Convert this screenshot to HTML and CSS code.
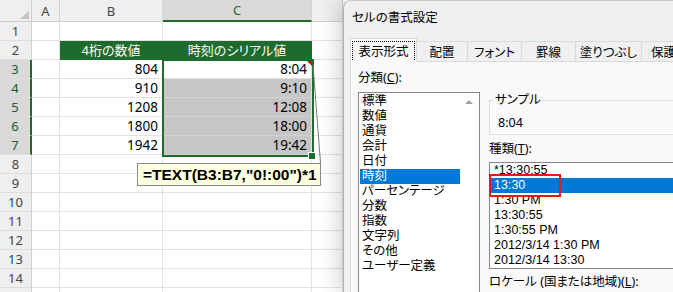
FILE: index.html
```html
<!DOCTYPE html>
<html lang="ja">
<head>
<meta charset="utf-8">
<title>セルの書式設定</title>
<link rel="stylesheet" href="styles.css">
</head>
<body>
<div class="sheet">
  <div class="cell corner"><span class="tri"></span></div>
  <div class="cell colh">A</div>
  <div class="cell colh">B</div>
  <div class="cell colh sel">C</div>
  <div class="cell colh"></div>

  <div class="cell rowh">1</div><div class="cell"></div><div class="cell"></div><div class="cell"></div><div class="cell"></div>
  <div class="cell rowh">2</div><div class="cell"></div><div class="cell hdr">4桁の数値</div><div class="cell hdr">時刻のシリアル値</div><div class="cell"></div>
  <div class="cell rowh sel">3</div><div class="cell"></div><div class="cell">804</div><div class="cell">8:04</div><div class="cell"></div>
  <div class="cell rowh sel">4</div><div class="cell"></div><div class="cell">910</div><div class="cell fill">9:10</div><div class="cell"></div>
  <div class="cell rowh sel">5</div><div class="cell"></div><div class="cell">1208</div><div class="cell fill">12:08</div><div class="cell"></div>
  <div class="cell rowh sel">6</div><div class="cell"></div><div class="cell">1800</div><div class="cell fill">18:00</div><div class="cell"></div>
  <div class="cell rowh sel">7</div><div class="cell"></div><div class="cell">1942</div><div class="cell fill">19:42</div><div class="cell"></div>
  <div class="cell rowh">8</div><div class="cell"></div><div class="cell"></div><div class="cell"></div><div class="cell"></div>
  <div class="cell rowh">9</div><div class="cell"></div><div class="cell"></div><div class="cell"></div><div class="cell"></div>
  <div class="cell rowh">10</div><div class="cell"></div><div class="cell"></div><div class="cell"></div><div class="cell"></div>
  <div class="cell rowh">11</div><div class="cell"></div><div class="cell"></div><div class="cell"></div><div class="cell"></div>
  <div class="cell rowh">12</div><div class="cell"></div><div class="cell"></div><div class="cell"></div><div class="cell"></div>
  <div class="cell rowh">13</div><div class="cell"></div><div class="cell"></div><div class="cell"></div><div class="cell"></div>
  <div class="cell rowh">14</div><div class="cell"></div><div class="cell"></div><div class="cell"></div><div class="cell"></div>
  <div class="cell rowh"></div><div class="cell"></div><div class="cell"></div><div class="cell"></div><div class="cell"></div>

  <div class="selbox"></div>
  <div class="handle"></div>
  <div class="redmark"></div>
  <svg class="arrow" width="30" height="110" viewBox="0 0 30 110"><line x1="13" y1="5" x2="20.5" y2="103" stroke="#7a7a7a" stroke-width="1"/></svg>
  <div class="note">=TEXT(B3:B7,"0!:00")*1</div>
</div>

<div class="dialog">
  <div class="title">セルの書式設定</div>
  <div class="tabs">
    <div class="tab active"><span class="focus">表示形式</span></div>
    <div class="tab">配置</div>
    <div class="tab">フォント</div>
    <div class="tab">罫線</div>
    <div class="tab">塗りつぶし</div>
    <div class="tab tab-last">保護</div>
  </div>
  <div class="panel">
    <div class="leftcol">
      <div class="label">分類(<u>C</u>):</div>
      <div class="catlist">
        <div class="items">
          <div class="item">標準</div>
          <div class="item">数値</div>
          <div class="item">通貨</div>
          <div class="item">会計</div>
          <div class="item">日付</div>
          <div class="item sel">時刻</div>
          <div class="item">パーセンテージ</div>
          <div class="item">分数</div>
          <div class="item">指数</div>
          <div class="item">文字列</div>
          <div class="item">その他</div>
          <div class="item">ユーザー定義</div>
        </div>
        <div class="scroll"><span class="uparrow"></span></div>
      </div>
    </div>
    <div class="rightcol">
      <fieldset class="group">
        <legend>サンプル</legend>
        <div class="sample">8:04</div>
      </fieldset>
      <div class="label gap6">種類(<u>T</u>):</div>
      <div class="typelist">
        <div class="titem">*13:30:55</div>
        <div class="titem sel">13:30</div>
        <div class="titem">1:30 PM</div>
        <div class="titem">13:30:55</div>
        <div class="titem">1:30:55 PM</div>
        <div class="titem">2012/3/14 1:30 PM</div>
        <div class="titem">2012/3/14 13:30</div>
        <div class="redbox"></div>
      </div>
      <div class="label gap5">ロケール (国または地域)(<u>L</u>):</div>
    </div>
  </div>
</div>
</body>
</html>
```

FILE: styles.css
```css
* { box-sizing: border-box; margin: 0; padding: 0; }
html, body { width: 673px; height: 292px; overflow: hidden; background: #fff; }
body {
  display: flex;
  font-family: "Noto Sans", "Noto Sans CJK JP", sans-serif;
  font-feature-settings: "palt";
  color: #000;
}

/* ---------- spreadsheet ---------- */
.sheet {
  position: relative;
  flex: 0 0 343px;
  display: grid;
  grid-template-columns: 32px 28px 103px 149px 31px;
  grid-template-rows: 22px repeat(15, 19px);
  align-content: start;
}
.cell {
  border-right: 1px solid #e1e1e1;
  border-bottom: 1px solid #e1e1e1;
  font-size: 13.5px;
  line-height: 18px;
  display: flex;
  align-items: center;
  justify-content: flex-end;
  padding-right: 4px;
  white-space: nowrap;
  overflow: hidden;
}
.corner {
  background: #efefef;
  border-right: 1px solid #cfcfcf;
  border-bottom: 1px solid #cfcfcf;
  align-items: flex-end;
  padding: 0 2px 2px 0;
}
.tri {
  width: 0; height: 0;
  border-left: 9px solid transparent;
  border-bottom: 8px solid #c4c4c4;
}
.colh {
  background: #efefef;
  border-right: 1px solid #d4d4d4;
  border-bottom: 1px solid #cfcfcf;
  justify-content: center;
  padding: 0;
  font-size: 13px;
  color: #444;
}
.colh.sel {
  background: #d9d9d9;
  color: #1e6b2e;
  border-bottom: 2px solid #1e6b2e;
}
.rowh {
  background: #efefef;
  border-right: 1px solid #cfcfcf;
  border-bottom: 1px solid #dcdcdc;
  justify-content: center;
  padding: 0;
  font-size: 13px;
  color: #444;
}
.rowh.sel {
  background: #d9d9d9;
  color: #1f5a33;
  border-right: 2px solid #1e6b2e;
}
.hdr {
  background: #1e6b2e;
  border-color: #1e6b2e;
  color: #fff;
  justify-content: center;
  font-size: 13px;
  padding: 0;
}
.fill {
  background: #c6c6c6;
  border-bottom-color: #d2d2d2;
}
.selbox {
  position: absolute;
  left: 162px; top: 59px;
  width: 152px; height: 98px;
  border: 2px solid #1e6b2e;
}
.handle {
  position: absolute;
  left: 308px; top: 152px;
  width: 8px; height: 8px;
  background: #1e6b2e;
  border: 1px solid #fff;
}
.redmark {
  position: absolute;
  left: 307px; top: 61px;
  width: 0; height: 0;
  border-top: 5px solid #e00000;
  border-left: 5px solid transparent;
}
.arrow {
  position: absolute;
  left: 300px; top: 60px;
}
.note {
  position: absolute;
  left: 137px; top: 163px;
  width: 184px; height: 23px;
  background: #ffffe1;
  border: 1px solid #8a8a8a;
  font-family: "Liberation Sans", Arial, sans-serif;
  font-weight: bold;
  font-size: 15.5px;
  line-height: 21px;
  padding-left: 5px;
  white-space: nowrap;
}

/* ---------- dialog ---------- */
.dialog {
  position: relative;
  z-index: 2;
  flex: 0 0 400px;
  height: 292px;
  background: #f0f0f0;
  border-left: 1px solid #b4b4b4;
  border-top: 1px solid #c8c8c8;
  border-top-left-radius: 8px;
  box-shadow: -3px 0 22px rgba(0, 0, 0, 0.2);
  font-size: 12.5px;
}
.title {
  height: 31px;
  display: flex;
  align-items: center;
  padding-left: 8px;
  font-size: 12.5px;
}
.tabs {
  display: grid;
  grid-template-columns: 67px 51px 54px 54px 66px 80px;
  height: 24px;
  margin-top: 6px;
  margin-left: 6px;
  align-items: end;
}
.tab {
  height: 21px;
  border: 1px solid #d9d9d9;
  border-left: none;
  background: #f0f0f0;
  display: flex;
  align-items: center;
  justify-content: center;
  white-space: nowrap;
  overflow: hidden;
}
.tab.active {
  height: 24px;
  border-left: 1px solid #d9d9d9;
  background: #f9f9f9;
  border-bottom-color: #f9f9f9;
}
.tab-last { justify-content: flex-start; padding-left: 9px; }
.focus {
  outline: 1px dotted #000;
  padding: 2px 5px;
  line-height: 15px;
  margin-top: 2px;
}
.panel {
  margin-left: 6px;
  height: 230px;
  background: #f9f9f9;
  border-left: 1px solid #d9d9d9;
  display: flex;
  gap: 9px;
  padding: 8px 0 0 7px;
}
.label { line-height: 16px; height: 16px; white-space: nowrap; }
.gap6 { margin-top: 6px; }
.gap5 { margin-top: 5px; }
.leftcol { flex: none; width: 122px; }
.catlist {
  margin-top: 6px;
  height: 210px;
  border: 1px solid #828790;
  background: #fff;
  padding: 1px;
  display: flex;
}
.items { width: 100px; flex: none; }
.item, .titem {
  font-family: "Liberation Sans", "Noto Sans CJK JP", sans-serif;
  height: 15px;
  line-height: 15px;
  white-space: nowrap;
}
.item { padding-left: 2px; }
.titem { padding-left: 3px; font-size: 12.5px; }
.item.sel, .titem.sel { background: #0078d7; color: #fff; }
.scroll {
  flex: 1;
  display: flex;
  justify-content: center;
  padding-top: 6px;
}
.uparrow {
  width: 0; height: 0;
  border-left: 4px solid transparent;
  border-right: 4px solid transparent;
  border-bottom: 4px solid #a3a3a3;
}
.rightcol { flex: none; width: 230px; }
.group {
  margin-top: 22px;
  border: 1px solid #dcdcdc;
  padding: 7px 0 2px 4px;
  height: 43px;
}
.group legend {
  padding: 0 1px;
  line-height: 16px;
}
.sample { margin-left: 4px; line-height: 16px; }
.typelist {
  position: relative;
  margin-top: 5px;
  height: 107px;
  border: 1px solid #828790;
  background: #fff;
  padding: 0 0 0 1px;
}
.redbox {
  position: absolute;
  left: -1px; top: 11px;
  width: 72px; height: 23px;
  border: 2px solid #e81818;
}
```
